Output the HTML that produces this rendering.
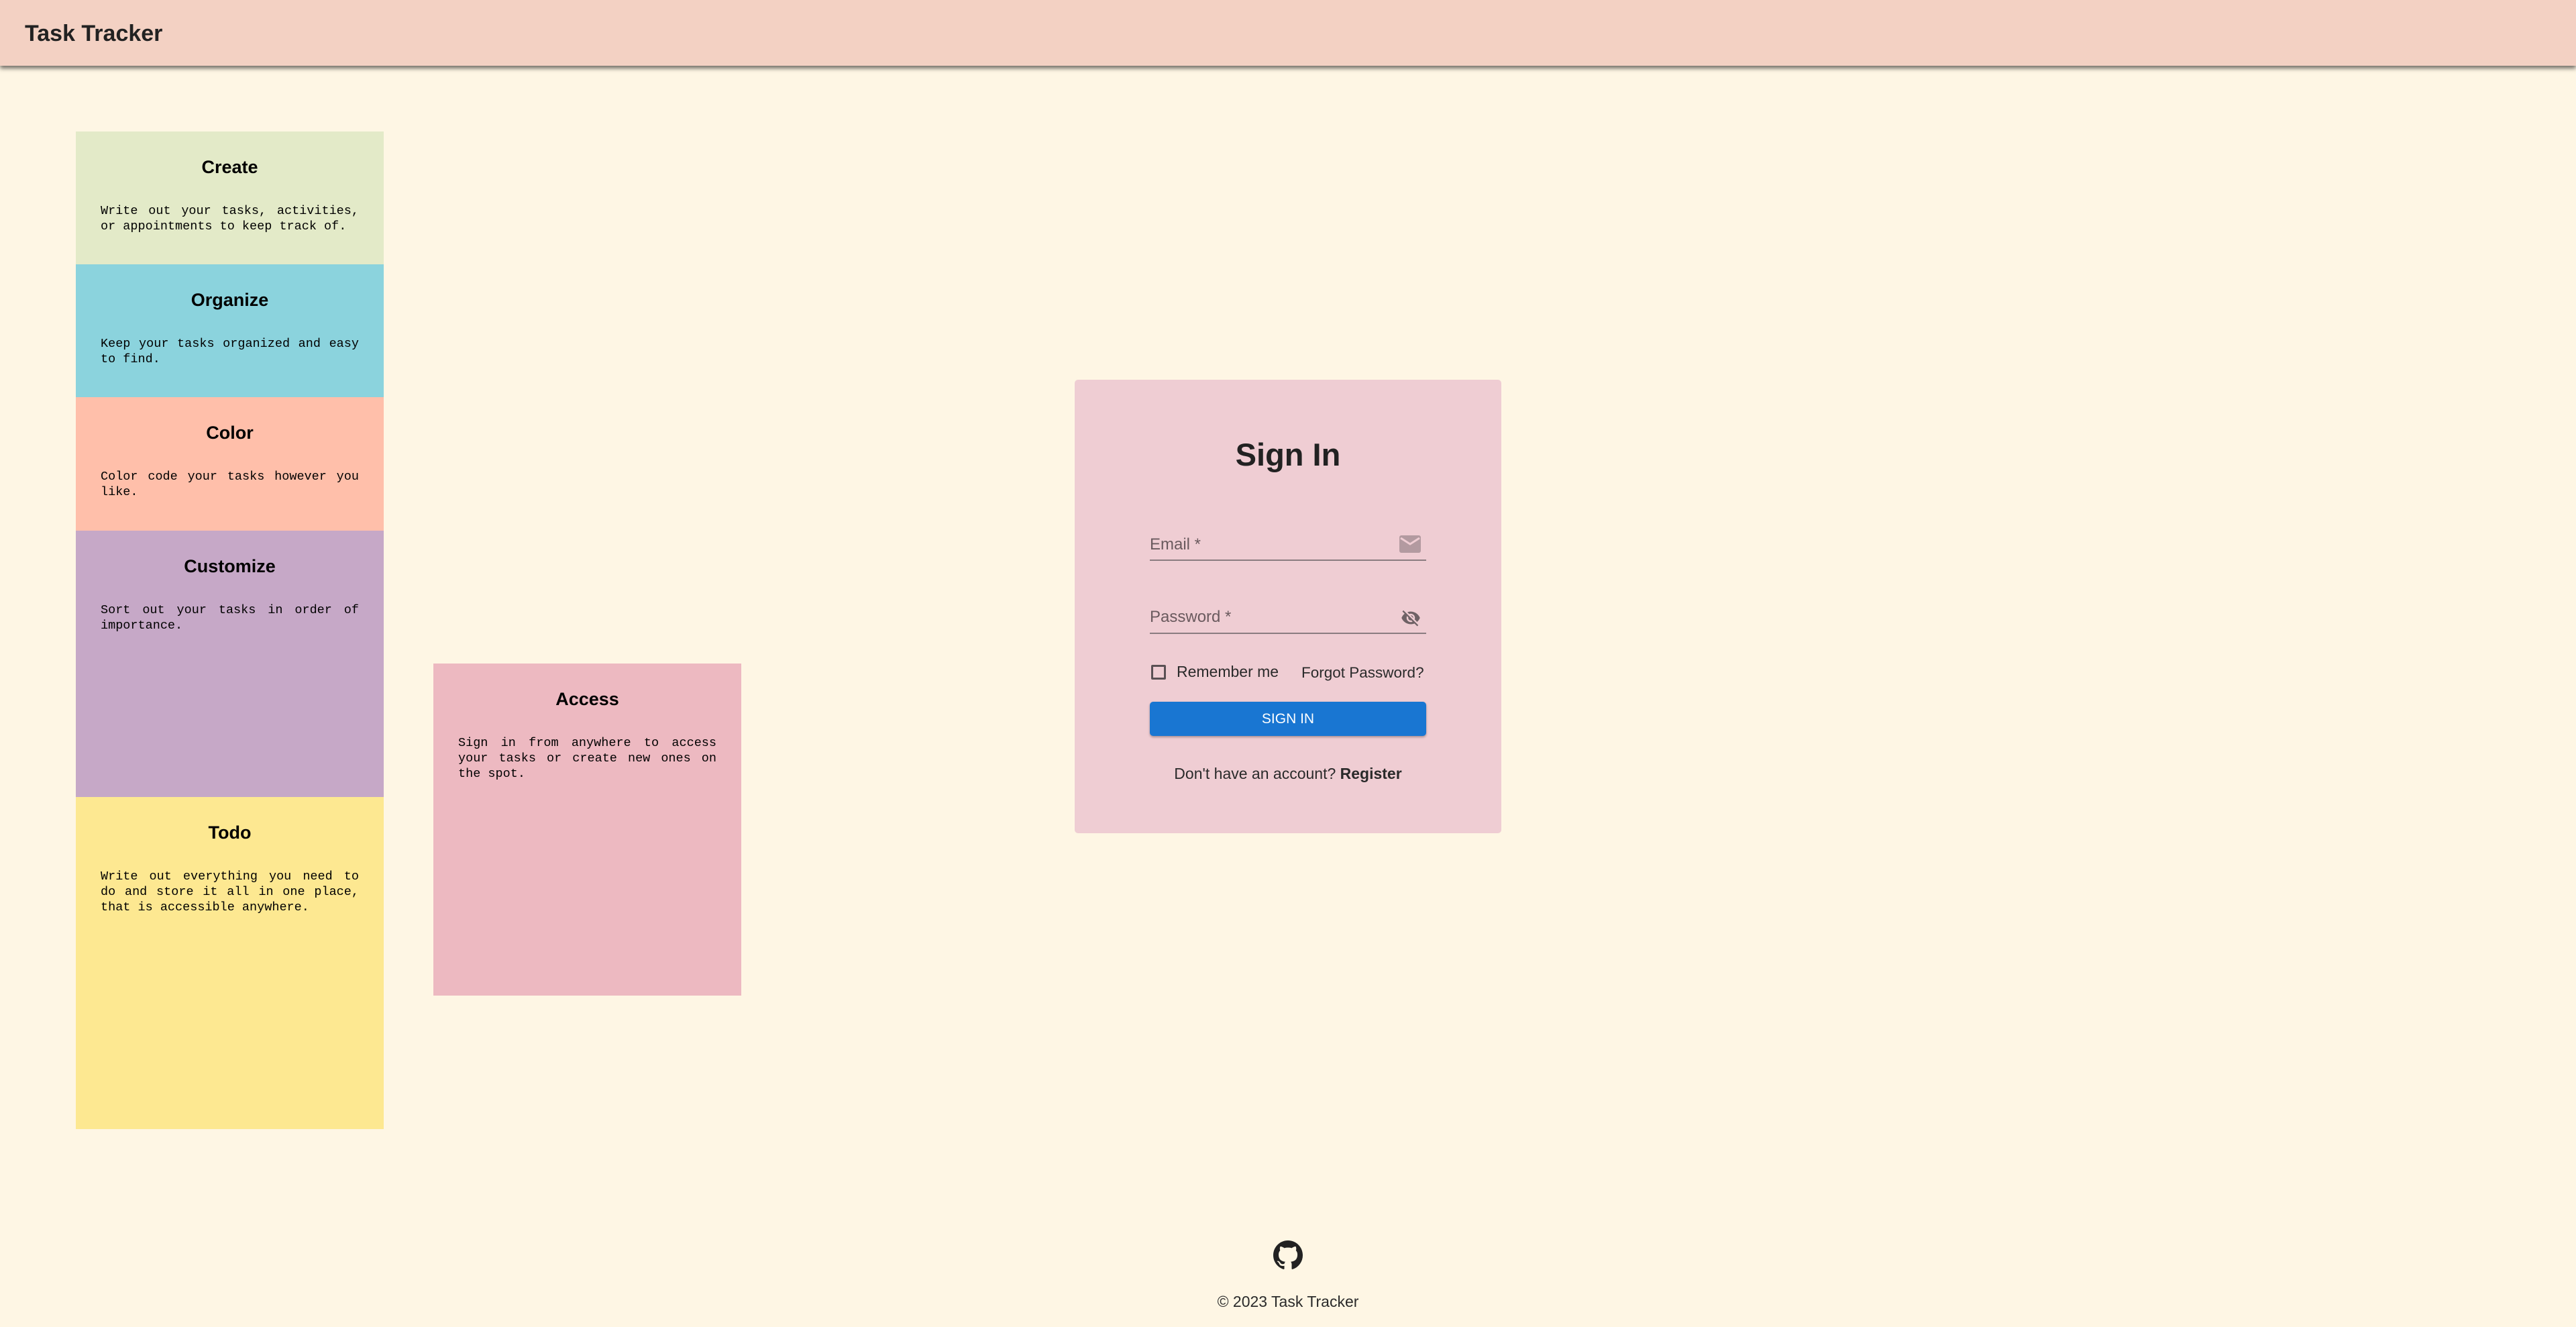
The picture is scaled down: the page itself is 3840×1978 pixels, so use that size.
<!DOCTYPE html>
<html><head><meta charset="utf-8"><style>
*{margin:0;padding:0;box-sizing:border-box}
body{width:3840px;height:1978px;background:#fef6e4;position:relative;overflow:hidden;font-family:"Liberation Sans",sans-serif}
.hdr{position:absolute;left:0;top:0;width:3840px;height:98px;background:#f3d1c3;box-shadow:0 4px 6px rgba(0,0,0,.55)}
.hdr span{position:absolute;left:37px;top:31px;font-size:34px;font-weight:bold;color:#222}
.card{position:absolute;width:459px;text-align:center}
.card h3{font-size:27px;font-weight:bold;color:#000;margin-top:38px}
.card p{font-family:"Liberation Mono",monospace;font-size:18.5px;line-height:23px;text-align:justify;padding:0 37px;margin-top:38px;color:#000}
.box{position:absolute;left:1602px;top:566px;width:636px;height:676px;background:#efcdd3;border-radius:5px}
.lbl{position:absolute;left:112px;font-size:24px;color:#6a5a5e}
.line{position:absolute;left:112px;width:412px;height:2px;background:#8a7c80}
</style></head><body>
<div class="hdr"><span>Task Tracker</span></div>

<div class="card" style="left:113px;top:196px;height:198px;background:#e3eac8"><h3>Create</h3><p>Write out your tasks, activities, or appointments to keep track of.</p></div>
<div class="card" style="left:113px;top:394px;height:198px;background:#8bd3dd"><h3>Organize</h3><p>Keep your tasks organized and easy to find.</p></div>
<div class="card" style="left:113px;top:592px;height:199px;background:#ffbfaa"><h3>Color</h3><p>Color code your tasks however you like.</p></div>
<div class="card" style="left:113px;top:791px;height:397px;background:#c6a8c7"><h3>Customize</h3><p>Sort out your tasks in order of importance.</p></div>
<div class="card" style="left:113px;top:1188px;height:495px;background:#fde891"><h3>Todo</h3><p>Write out everything you need to do and store it all in one place, that is accessible anywhere.</p></div>
<div class="card" style="left:646px;top:989px;height:495px;background:#edb9c1"><h3>Access</h3><p>Sign in from anywhere to access your tasks or create new ones on the spot.</p></div>

<div class="box">
<div style="position:absolute;left:0;width:636px;top:84px;text-align:center;font-size:47px;font-weight:bold;color:#222">Sign In</div>
<div class="lbl" style="top:232px">Email *</div>
<svg style="position:absolute;left:484px;top:232px" width="32" height="26" viewBox="0 0 32 26"><rect width="32" height="26" rx="3" fill="#b39aa0"/><path d="M2 4 L16 13 L30 4" stroke="#efcdd3" stroke-width="3" fill="none"/></svg>
<div class="line" style="top:268px"></div>
<div class="lbl" style="top:340px">Password *</div>
<svg style="position:absolute;left:484px;top:340px" width="34" height="30" viewBox="0 0 24 24"><path fill="#6f6266" d="M12 7c2.760 0 5 2.24 5 5 0 .65-.13 1.26-.36 1.830l2.92 2.92c1.51-1.26 2.7-2.89 3.43-4.75-1.73-4.39-6-7.5-11-7.5-1.4 0-2.74.25-3.98.7l2.16 2.16C10.74 7.13 11.35 7 12 7zM2 4.27l2.28 2.28.46.46C3.08 8.3 1.78 10.02 1 12c1.73 4.39 6 7.5 11 7.5 1.55 0 3.03-.3 4.38-.84l.42.42L19.73 22 21 20.73 3.27 3 2 4.27zM7.53 9.8l1.55 1.55c-.05.21-.08.43-.08.65 0 1.66 1.34 3 3 3 .22 0 .44-.03.65-.08l1.55 1.55c-.67.33-1.41.53-2.2.53-2.76 0-5-2.24-5-5 0-.79.2-1.53.53-2.2zm4.31-.78l3.15 3.15.02-.16c0-1.66-1.340-3-3-3l-.17.01z"/></svg>
<div class="line" style="top:377px"></div>
<div style="position:absolute;left:114px;top:425px;width:22px;height:22px;border:3px solid #5a5054;border-radius:2px"></div>
<div style="position:absolute;left:152px;top:422px;font-size:23px;color:#2a2a2a">Remember me</div>
<div style="position:absolute;left:338px;top:424px;font-size:22.5px;color:#2a2a2a">Forgot Password?</div>
<div style="position:absolute;left:112px;top:480px;width:412px;height:51px;background:#1976d2;border-radius:5px;box-shadow:0 2px 3px rgba(0,0,0,.3);color:#fff;font-size:21px;text-align:center;line-height:51px">SIGN IN</div>
<div style="position:absolute;left:0;width:636px;top:574px;text-align:center;font-size:23px;color:#2a2a2a">Don't have an account? <b>Register</b></div>
</div>

<svg style="position:absolute;left:1898px;top:1849px" width="44" height="44" viewBox="0 0 16 16"><path fill="#222" d="M8 0C3.58 0 0 3.58 0 8c0 3.54 2.29 6.53 5.47 7.59.4.07.55-.17.55-.38 0-.19-.01-.82-.01-1.49-2.01.37-2.530-.49-2.69-.94-.09-.23-.48-.94-.82-1.13-.28-.15-.68-.52-.01-.53.63-.01 1.08.58 1.23.82.72 1.21 1.87.87 2.33.66.07-.52.28-.87.51-1.07-1.78-.2-3.64-.89-3.64-3.95 0-.87.31-1.59.82-2.15-.08-.2-.36-1.02.08-2.12 0 0 .67-.21 2.2.82.64-.18 1.32-.27 2-.27.68 0 1.36.09 2 .27 1.53-1.04 2.2-.82 2.2-.82.44 1.1.16 1.92.08 2.12.51.56.82 1.27.82 2.15 0 3.07-1.87 3.75-3.65 3.95.29.25.54.73.54 1.48 0 1.07-.01 1.93-.01 2.2 0 .21.15.46.55.38A8.013 8.013 0 0016 8c0-4.42-3.58-8-8-8z"/></svg>
<div style="position:absolute;left:0;width:3840px;top:1927px;text-align:center;font-size:23px;color:#2a2a2a">© 2023 Task Tracker</div>
</body></html>
